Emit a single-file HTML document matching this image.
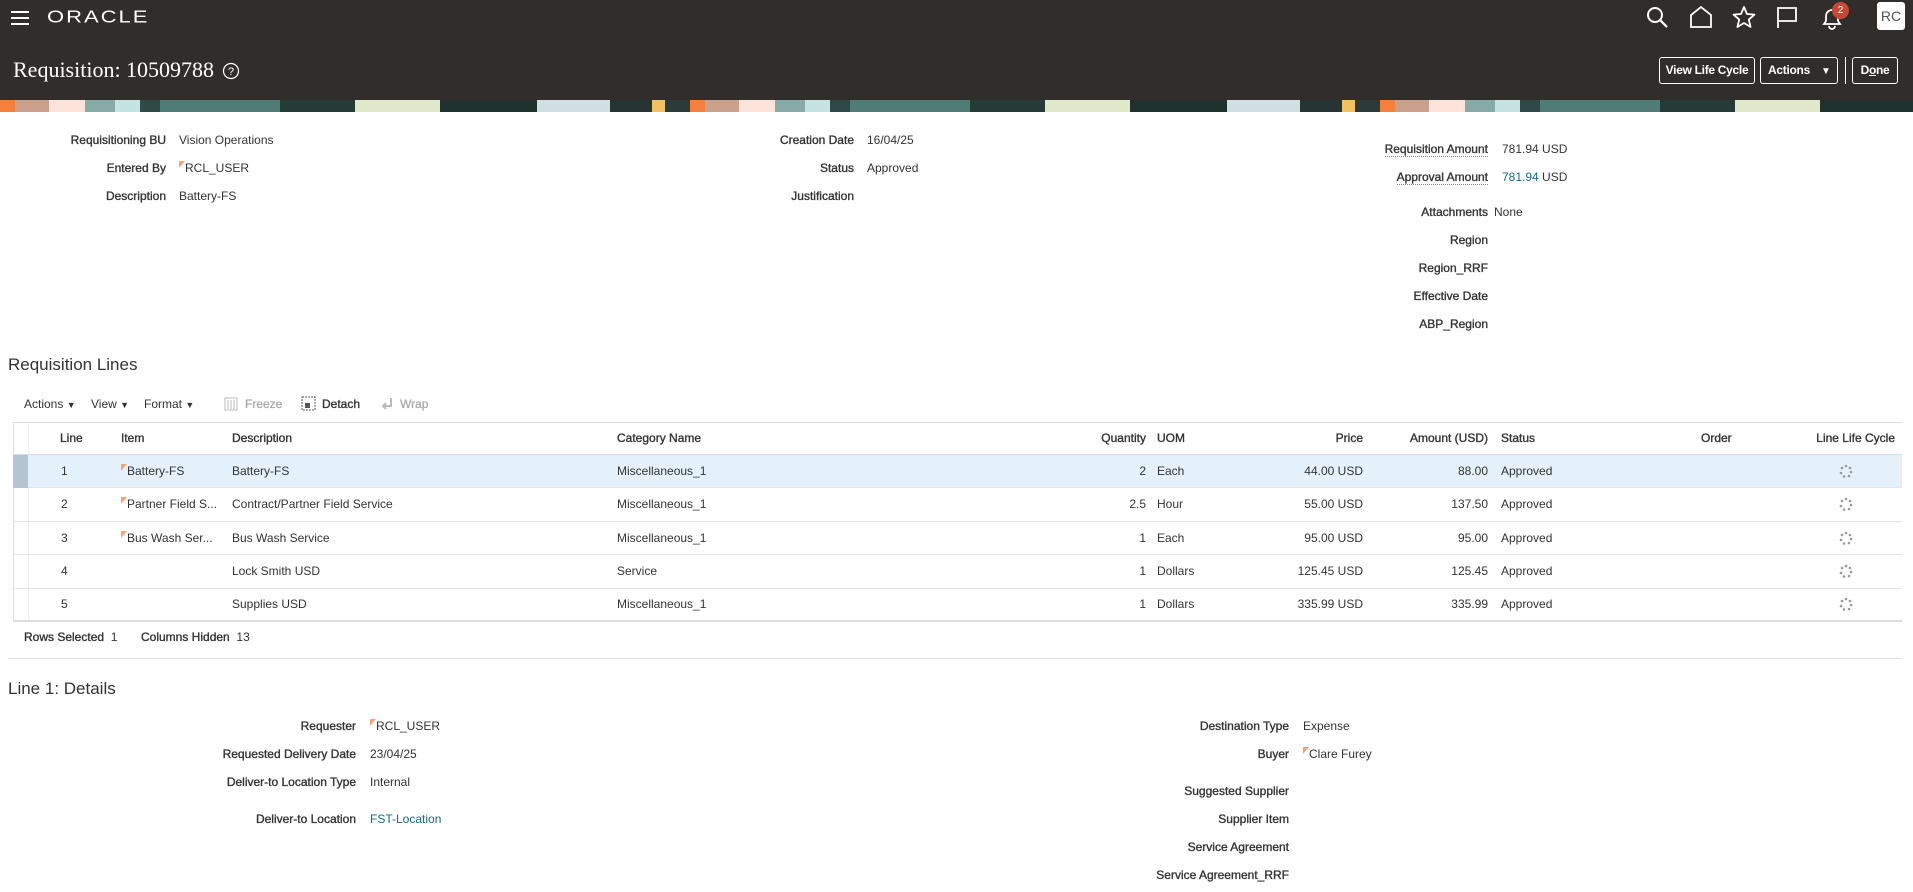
<!DOCTYPE html>
<html><head><meta charset="utf-8"><style>
*{margin:0;padding:0;box-sizing:border-box}
body{width:1913px;height:892px;overflow:hidden;background:#fff;font-family:"Liberation Sans",Arial,sans-serif;font-size:12px;color:#333;position:relative}
.a{position:absolute;white-space:nowrap;line-height:14px}
.hdr{position:absolute;left:0;top:0;width:1913px;height:100px;background:#312d2a}
.ban{position:absolute;left:0;top:100px;width:1913px;height:12px;
background:repeating-linear-gradient(90deg,#f5803e 0 15px,#c9a08a 15px 49px,#fde3da 49px 85px,#86aba7 85px 115px,#c5e3e3 115px 140px,#2f4a46 140px 160px,#4f7c77 160px 280px,#253b38 280px 355px,#dfe8c9 355px 440px,#1f3230 440px 537px,#cfdfe2 537px 610px,#243533 610px 652px,#f2c162 652px 665px,#2a3b39 665px 690px)}
.lb{text-align:right;color:#333;-webkit-text-stroke:0.35px #333}
.btn{position:absolute;top:57px;height:27px;border:1px solid #fff;border-radius:3px;color:#fff;font-weight:bold;font-size:12px;line-height:25px;padding:0 4px;white-space:nowrap;letter-spacing:-0.3px}
.th{-webkit-text-stroke:0.35px #333}
.row{position:absolute;left:13px;width:1889px;height:33px;border-bottom:1px solid #e5e5e5}
.tri{display:inline-block;width:0;height:0;border-left:6px solid #f4a57c;border-bottom:7px solid transparent;vertical-align:top}
.lnk{color:#136b85}
.ul{border-bottom:1px dotted #888}
</style></head><body>
<div class="hdr"></div>
<div class="ban"></div>
<svg class="a" style="left:10px;top:10px" width="20" height="16"><path d="M1 2h18M1 8h18M1 14h18" stroke="#fff" stroke-width="2"/></svg>
<div class="a" style="left:47px;top:5px;color:#fff;font-size:22px;line-height:24px;letter-spacing:2px;transform:scaleY(0.8);transform-origin:left center">ORACLE</div>
<svg class="a" style="left:1646px;top:6px" width="24" height="24"><circle cx="9" cy="9" r="7" fill="none" stroke="#fff" stroke-width="2"/><path d="M14 14l7 7" stroke="#fff" stroke-width="2.2"/></svg>
<svg class="a" style="left:1689px;top:5px" width="24" height="24"><path d="M2 22V10L12 2l10 8v12z" fill="none" stroke="#fff" stroke-width="1.8"/></svg>
<svg class="a" style="left:1732px;top:5px" width="24" height="24"><path d="M12 2l3 7 7.5 .6-5.7 5 1.8 7.4L12 18l-6.6 4 1.8-7.4-5.7-5L9 9z" fill="none" stroke="#fff" stroke-width="1.8" stroke-linejoin="round"/></svg>
<svg class="a" style="left:1776px;top:6px" width="22" height="24"><path d="M2 22V2h18v13H2" fill="none" stroke="#fff" stroke-width="1.8"/></svg>
<svg class="a" style="left:1820px;top:6px" width="24" height="24"><path d="M4 18h16l-2-3V10a6 6 0 0 0-12 0v5z" fill="none" stroke="#fff" stroke-width="1.8"/><path d="M9 20a3 3 0 0 0 6 0" fill="none" stroke="#fff" stroke-width="1.8"/></svg>
<div class="a" style="left:1832px;top:2px;width:17px;height:17px;border-radius:50%;background:#c74634;color:#fff;font-size:10px;line-height:17px;text-align:center">2</div>
<div class="a" style="left:1877px;top:2px;width:28px;height:28px;background:#fff;border-radius:3px;color:#555;font-size:14px;line-height:28px;text-align:center">RC</div>
<div class="a" style="left:13px;top:57px;color:#fff;font-family:'Liberation Serif',serif;font-size:22px;line-height:26px">Requisition: 10509788</div>
<svg class="a" style="left:222px;top:62px" width="18" height="18"><circle cx="9" cy="9" r="7.5" fill="none" stroke="#fff" stroke-width="1.2"/><text x="9" y="13" fill="#fff" font-size="11" text-anchor="middle" font-family="Liberation Sans">?</text></svg>
<div class="btn" style="left:1659px;width:96px;text-align:center">View Life Cycle</div>
<div class="btn" style="left:1760px;width:78px">&nbsp;Actions <span style="font-size:10px;margin-left:8px">▼</span></div>
<div class="a" style="left:1845px;top:57px;width:1px;height:27px;background:#fff"></div>
<div class="btn" style="left:1852px;width:46px;text-align:center">D<u>o</u>ne</div>

<div class="a lb" style="right:1747px;top:133px">Requisitioning BU</div><div class="a" style="left:179px;top:133px">Vision Operations</div>
<div class="a lb" style="right:1747px;top:161px">Entered By</div><div class="a" style="left:179px;top:161px"><span class="tri"></span>RCL_USER</div>
<div class="a lb" style="right:1747px;top:189px">Description</div><div class="a" style="left:179px;top:189px">Battery-FS</div>
<div class="a lb" style="right:1059px;top:133px">Creation Date</div><div class="a" style="left:867px;top:133px">16/04/25</div>
<div class="a lb" style="right:1059px;top:161px">Status</div><div class="a" style="left:867px;top:161px">Approved</div>
<div class="a lb" style="right:1059px;top:189px">Justification</div>
<div class="a lb" style="right:425px;top:142px"><span class="ul">Requisition Amount</span></div><div class="a" style="left:1502px;top:142px">781.94 USD</div>
<div class="a lb" style="right:425px;top:170px"><span class="ul">Approval Amount</span></div><div class="a" style="left:1502px;top:170px"><span class="lnk">781.94</span> USD</div>
<div class="a lb" style="right:425px;top:205px">Attachments</div><div class="a" style="left:1494px;top:205px">None</div>
<div class="a lb" style="right:425px;top:233px">Region</div>
<div class="a lb" style="right:425px;top:261px">Region_RRF</div>
<div class="a lb" style="right:425px;top:289px">Effective Date</div>
<div class="a lb" style="right:425px;top:317px">ABP_Region</div>

<div class="a" style="left:8px;top:355px;font-size:17px;line-height:20px">Requisition Lines</div>
<div class="a" style="left:24px;top:397px">Actions <span style="font-size:9px">▼</span></div>
<div class="a" style="left:91px;top:397px">View <span style="font-size:9px">▼</span></div>
<div class="a" style="left:144px;top:397px">Format <span style="font-size:9px">▼</span></div>
<svg class="a" style="left:224px;top:397px" width="14" height="14"><rect x="1" y="1" width="12" height="12" fill="none" stroke="#bbb"/><path d="M4 3v9M7 3v9M10 3v9" stroke="#bbb"/></svg>
<div class="a" style="left:245px;top:397px;color:#aaa;-webkit-text-stroke:0.3px #aaa">Freeze</div>
<svg class="a" style="left:301px;top:396px" width="15" height="15"><rect x="1" y="1" width="13" height="13" fill="none" stroke="#555" stroke-dasharray="2 1"/><rect x="4" y="7" width="5" height="5" fill="#555"/></svg>
<div class="a th" style="left:322px;top:397px">Detach</div>
<svg class="a" style="left:381px;top:397px" width="14" height="14"><path d="M10 1v8H3M5 6l-3 3 3 3" fill="none" stroke="#bbb" stroke-width="2"/></svg>
<div class="a" style="left:400px;top:397px;color:#aaa;-webkit-text-stroke:0.3px #aaa">Wrap</div>

<div class="a" style="left:13px;top:422px;width:1889px;height:1px;background:#ddd"></div>
<div class="a" style="left:13px;top:422px;width:1px;height:200px;background:#ddd"></div>
<div class="a" style="left:28px;top:422px;width:1px;height:200px;background:#eee"></div>
<div class="a" style="left:13px;top:454px;width:1889px;height:1px;background:#ddd"></div>
<div class="a th" style="left:60px;top:431px">Line</div>
<div class="a th" style="left:121px;top:431px">Item</div>
<div class="a th" style="left:232px;top:431px">Description</div>
<div class="a th" style="left:617px;top:431px">Category Name</div>
<div class="a th" style="right:767px;top:431px">Quantity</div>
<div class="a th" style="left:1157px;top:431px">UOM</div>
<div class="a th" style="right:550px;top:431px">Price</div>
<div class="a th" style="right:425px;top:431px">Amount (USD)</div>
<div class="a th" style="left:1501px;top:431px">Status</div>
<div class="a th" style="left:1701px;top:431px">Order</div>
<div class="a th" style="right:18px;top:431px">Line Life Cycle</div>

<div class="row" style="top:455px;background:#e4f1fb"></div>
<div class="a" style="left:13px;top:455px;width:15px;height:33px;background:#b4c4d0"></div>
<div class="row" style="top:489px"></div>
<div class="row" style="top:522px"></div>
<div class="row" style="top:556px"></div>
<div class="row" style="top:589px;border-bottom:2px solid #ddd"></div>

<div class="a" style="left:61px;top:464px">1</div><div class="a" style="left:121px;top:464px"><span class="tri"></span>Battery-FS</div><div class="a" style="left:232px;top:464px">Battery-FS</div><div class="a" style="left:617px;top:464px">Miscellaneous_1</div><div class="a" style="right:767px;top:464px">2</div><div class="a" style="left:1157px;top:464px">Each</div><div class="a" style="right:550px;top:464px">44.00 USD</div><div class="a" style="right:425px;top:464px">88.00</div><div class="a" style="left:1501px;top:464px">Approved</div>
<div class="a" style="left:61px;top:497px">2</div><div class="a" style="left:121px;top:497px"><span class="tri"></span>Partner Field S...</div><div class="a" style="left:232px;top:497px">Contract/Partner Field Service</div><div class="a" style="left:617px;top:497px">Miscellaneous_1</div><div class="a" style="right:767px;top:497px">2.5</div><div class="a" style="left:1157px;top:497px">Hour</div><div class="a" style="right:550px;top:497px">55.00 USD</div><div class="a" style="right:425px;top:497px">137.50</div><div class="a" style="left:1501px;top:497px">Approved</div>
<div class="a" style="left:61px;top:531px">3</div><div class="a" style="left:121px;top:531px"><span class="tri"></span>Bus Wash Ser...</div><div class="a" style="left:232px;top:531px">Bus Wash Service</div><div class="a" style="left:617px;top:531px">Miscellaneous_1</div><div class="a" style="right:767px;top:531px">1</div><div class="a" style="left:1157px;top:531px">Each</div><div class="a" style="right:550px;top:531px">95.00 USD</div><div class="a" style="right:425px;top:531px">95.00</div><div class="a" style="left:1501px;top:531px">Approved</div>
<div class="a" style="left:61px;top:564px">4</div><div class="a" style="left:232px;top:564px">Lock Smith USD</div><div class="a" style="left:617px;top:564px">Service</div><div class="a" style="right:767px;top:564px">1</div><div class="a" style="left:1157px;top:564px">Dollars</div><div class="a" style="right:550px;top:564px">125.45 USD</div><div class="a" style="right:425px;top:564px">125.45</div><div class="a" style="left:1501px;top:564px">Approved</div>
<div class="a" style="left:61px;top:597px">5</div><div class="a" style="left:232px;top:597px">Supplies USD</div><div class="a" style="left:617px;top:597px">Miscellaneous_1</div><div class="a" style="right:767px;top:597px">1</div><div class="a" style="left:1157px;top:597px">Dollars</div><div class="a" style="right:550px;top:597px">335.99 USD</div><div class="a" style="right:425px;top:597px">335.99</div><div class="a" style="left:1501px;top:597px">Approved</div>
<svg class="a" style="left:1839px;top:464px" width="14" height="148"><g fill="#999"><g id="lc"><circle cx="7" cy="2" r="1.3"/><circle cx="11" cy="4" r="1.3"/><circle cx="12" cy="8" r="1.3"/><circle cx="10" cy="12" r="1.3"/><circle cx="5" cy="12.5" r="1.3"/><circle cx="2" cy="9" r="1.3"/><circle cx="3" cy="4" r="1.3"/></g>
<use href="#lc" y="33"/><use href="#lc" y="67"/><use href="#lc" y="100"/><use href="#lc" y="133"/></g></svg>

<div class="a th" style="left:24px;top:630px">Rows Selected&nbsp; <span style="-webkit-text-stroke:0">1</span></div>
<div class="a th" style="left:141px;top:630px">Columns Hidden&nbsp; <span style="-webkit-text-stroke:0">13</span></div>
<div class="a" style="left:8px;top:658px;width:1894px;height:1px;background:#ddd"></div>

<div class="a" style="left:8px;top:679px;font-size:17px;line-height:20px">Line 1: Details</div>
<div class="a lb" style="right:1557px;top:719px">Requester</div><div class="a" style="left:370px;top:719px"><span class="tri"></span>RCL_USER</div>
<div class="a lb" style="right:1557px;top:747px">Requested Delivery Date</div><div class="a" style="left:370px;top:747px">23/04/25</div>
<div class="a lb" style="right:1557px;top:775px">Deliver-to Location Type</div><div class="a" style="left:370px;top:775px">Internal</div>
<div class="a lb" style="right:1557px;top:812px">Deliver-to Location</div><div class="a lnk" style="left:370px;top:812px">FST-Location</div>
<div class="a lb" style="right:624px;top:719px">Destination Type</div><div class="a" style="left:1303px;top:719px">Expense</div>
<div class="a lb" style="right:624px;top:747px">Buyer</div><div class="a" style="left:1303px;top:747px"><span class="tri"></span>Clare Furey</div>
<div class="a lb" style="right:624px;top:784px">Suggested Supplier</div>
<div class="a lb" style="right:624px;top:812px">Supplier Item</div>
<div class="a lb" style="right:624px;top:840px">Service Agreement</div>
<div class="a lb" style="right:624px;top:868px">Service Agreement_RRF</div>
</body></html>
